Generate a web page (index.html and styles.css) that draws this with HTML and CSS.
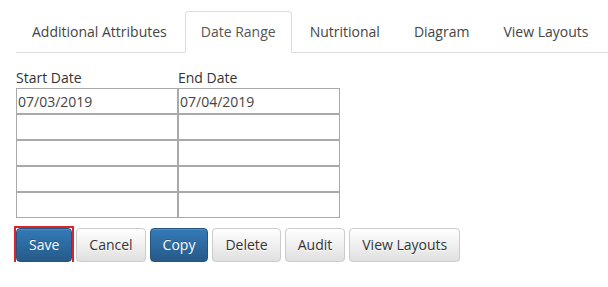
FILE: index.html
```html
<!DOCTYPE html>
<html lang="en">
<head>
    <meta charset="UTF-8">
    <meta name="viewport" content="width=device-width, initial-scale=1.0">
    <title>Date Range</title>
    <link rel="stylesheet" href="styles.css">
</head>
<body>
    <div class="page">
        <ul class="nav-tabs">
            <li><a href="#">Additional Attributes</a></li>
            <li class="active"><a href="#">Date Range</a></li>
            <li><a href="#">Nutritional</a></li>
            <li><a href="#">Diagram</a></li>
            <li><a href="#">View Layouts</a></li>
        </ul>

        <div class="tab-content">
            <div class="date-grid">
                <label class="col-label">Start Date</label>
                <label class="col-label">End Date</label>

                <input type="text" value="07/03/2019">
                <input type="text" value="07/04/2019">
                <input type="text">
                <input type="text">
                <input type="text">
                <input type="text">
                <input type="text">
                <input type="text">
                <input type="text">
                <input type="text">
            </div>

            <div class="actions">
                <span class="focus-ring"><button class="btn btn-primary">Save</button></span>
                <button class="btn btn-default">Cancel</button>
                <button class="btn btn-primary">Copy</button>
                <button class="btn btn-default">Delete</button>
                <button class="btn btn-default">Audit</button>
                <button class="btn btn-default">View Layouts</button>
            </div>
        </div>
    </div>
</body>
</html>
```

FILE: styles.css
```css
* {
    margin: 0;
    padding: 0;
    box-sizing: border-box;
}

body {
    font-family: "Open Sans", Arial, sans-serif;
    font-size: 14px;
    line-height: 20px;
    color: #333;
    background: #fff;
}

.page {
    padding: 11px 0 0 16px;
}

.nav-tabs {
    display: flex;
    list-style: none;
    border-bottom: 1px solid #ddd;
}

.nav-tabs li {
    margin-bottom: -1px;
}

.nav-tabs a {
    display: block;
    padding: 10px 15px;
    margin-right: 2px;
    border: 1px solid transparent;
    border-radius: 4px 4px 0 0;
    color: #444;
    text-decoration: none;
}

.nav-tabs .active a {
    color: #555;
    background: #fff;
    border-color: #ddd;
    border-bottom-color: transparent;
}

.tab-content {
    padding-top: 15px;
}

.date-grid {
    display: grid;
    grid-template-columns: 162px 162px;
}

.col-label {
    line-height: 20px;
    color: #333;
}

.date-grid input {
    height: 26px;
    width: 162px;
    padding: 0 1px;
    border: 1px solid #a9a9a9;
    font-family: "Open Sans", Arial, sans-serif;
    font-size: 14px;
    color: #444;
    background: #fff;
    outline: none;
}

.actions {
    display: flex;
    align-items: flex-start;
    gap: 4px;
    margin-top: 10px;
}

.btn {
    padding: 6px 12px;
    font-family: "Open Sans", Arial, sans-serif;
    font-size: 14px;
    line-height: 20px;
    border: 1px solid transparent;
    border-radius: 4px;
    cursor: pointer;
    box-shadow: inset 0 1px 0 rgba(255, 255, 255, 0.15), 0 1px 1px rgba(0, 0, 0, 0.075);
}

.btn-default {
    color: #333;
    background: linear-gradient(to bottom, #fff 0, #e0e0e0 100%);
    border-color: #ccc;
    text-shadow: 0 1px 0 #fff;
}

.btn-primary {
    color: #fff;
    background: linear-gradient(to bottom, #337ab7 0, #265a88 100%);
    border-color: #245580;
    text-shadow: 0 -1px 0 rgba(0, 0, 0, 0.2);
}

/* red highlight frame round the Save button */
.focus-ring {
    display: flex;
    outline: 2px solid #d9232d;
}
```
